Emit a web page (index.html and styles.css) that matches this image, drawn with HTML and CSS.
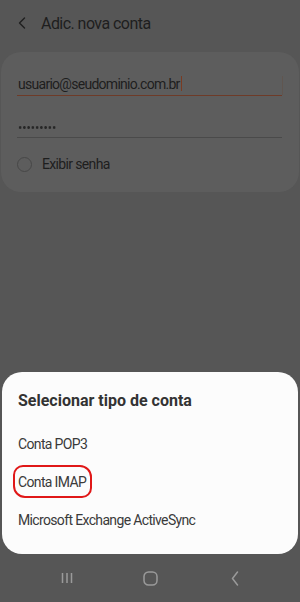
FILE: index.html
```html
<!DOCTYPE html>
<html lang="pt">
<head>
<meta charset="utf-8">
<title>Adic. nova conta</title>
<link rel="stylesheet" href="styles.css">
</head>
<body>
<div class="screen">
  <header class="appbar">
    <svg class="back" width="10" height="12" viewBox="0 0 10 12"><path d="M7.5 1 L2.5 6 L7.5 11" fill="none" stroke="#1f1f1f" stroke-width="1.4" stroke-linecap="round" stroke-linejoin="round"/></svg>
    <h1 class="title">Adic. nova conta</h1>
  </header>
  <section class="card">
    <div class="field focused">
      <span class="value">usuario@seudominio.com.br</span><span class="cursor"></span>
    </div>
    <div class="field pass">
      <span class="dots" aria-label="senha oculta"></span>
    </div>
    <label class="check">
      <span class="radio"></span>
      <span>Exibir senha</span>
    </label>
  </section>
  <nav class="navbar">
    <svg width="12" height="12" viewBox="0 0 12 12"><path d="M1.5 1v10M6 1v10M10.5 1v10" stroke="#9a9a9a" stroke-width="1.5" fill="none"/></svg>
    <svg width="15" height="15" viewBox="0 0 15 15"><rect x="1" y="1" width="13" height="13" rx="4.5" stroke="#9a9a9a" stroke-width="1.5" fill="none"/></svg>
    <svg width="8" height="15" viewBox="0 0 8 15"><path d="M6.5 1 L1.5 7.5 L6.5 14" stroke="#9a9a9a" stroke-width="1.5" fill="none" stroke-linecap="round" stroke-linejoin="round"/></svg>
  </nav>
  <div class="dialog">
    <h2 class="dlg-title">Selecionar tipo de conta</h2>
    <ul class="options">
      <li>Conta POP3</li>
      <li><span class="mark">Conta IMAP</span></li>
      <li>Microsoft Exchange ActiveSync</li>
    </ul>
  </div>
</div>
</body>
</html>
```

FILE: styles.css
```css
* { box-sizing: border-box; }
html, body { margin: 0; padding: 0; }
body {
  background: #565656;
  font-family: Roboto, "Noto Sans", "Liberation Sans", sans-serif;
  color: #1c1c1c;
}
.screen {
  position: relative;
  width: 300px;
  height: 602px;
  display: flex;
  flex-direction: column;
  overflow: hidden;
}
.appbar {
  height: 46px;
  display: flex;
  align-items: center;
  padding: 0 0 0 17px;
}
.back { margin-right: 14px; }
.title {
  margin: 0;
  font-size: 16px;
  font-weight: 400;
  color: #1e1e1e;
  letter-spacing: -0.55px;
}
.card {
  margin: 6px 1px 0 1px;
  height: 140px;
  background: #5d5d5d;
  border-radius: 20px;
  padding: 20px 16px 0 16px;
}
.field {
  height: 24px;
  display: flex;
  align-items: center;
  border-bottom: 1px solid #4a4a4a;
  font-size: 14px;
  letter-spacing: -0.72px;
  padding-left: 1px;
  margin-right: 1px;
}
.field.focused {
  border-bottom: 1.5px solid #6e3b28;
  position: relative;
}
.field.focused::after {
  content: "";
  position: absolute;
  right: -1px;
  top: 4px;
  bottom: 0;
  width: 1px;
  background: #605650;
}
.value { color: #1e1e1e; }
.cursor {
  display: inline-block;
  width: 1.5px;
  height: 15px;
  background: #7a3b22;
  margin-left: 1px;
}
.field.pass {
  margin-top: 18px;
  height: 24px;
  align-items: center;
  padding-bottom: 0;
}
.dots {
  display: block;
  width: 38px;
  height: 3px;
  margin-top: 4px;
  background: radial-gradient(circle, #262626 1.1px, transparent 1.6px) 0 0 / 4.25px 3px repeat-x;
}
.check {
  display: flex;
  align-items: center;
  margin-top: 18px;
  font-size: 14px;
  letter-spacing: -0.65px;
  color: #1e1e1e;
}
.radio {
  width: 15px;
  height: 15px;
  border: 1.3px solid #474747;
  border-radius: 50%;
  margin: 0 10px 0 0;
}
.navbar {
  margin-top: auto;
  height: 48px;
  display: flex;
  align-items: center;
  justify-content: space-between;
  padding: 0 61px 0 61px;
}
.navbar svg:nth-child(2) { margin-left: -4px; }
.dialog {
  position: absolute;
  left: 2px;
  right: 2px;
  bottom: 48px;
  height: 182px;
  background: #fcfcfc;
  border-radius: 20px;
  padding: 20px 16px 0 16px;
}
.dlg-title {
  margin: 0;
  font-size: 16px;
  font-weight: 700;
  color: #333;
  line-height: 18px;
}
.options {
  list-style: none;
  margin: 24px 0 0 0;
  padding: 0;
}
.options li {
  height: 38px;
  line-height: 20px;
  font-size: 14px;
  letter-spacing: -0.65px;
  color: #3a3a3a;
}
.mark {
  display: inline-block;
  position: relative;
}
.mark::before {
  content: "";
  position: absolute;
  left: -5px;
  right: -6px;
  top: -7px;
  bottom: -6px;
  border: 2px solid #e01818;
  border-radius: 10px 12px 10px 12px;
}
```
